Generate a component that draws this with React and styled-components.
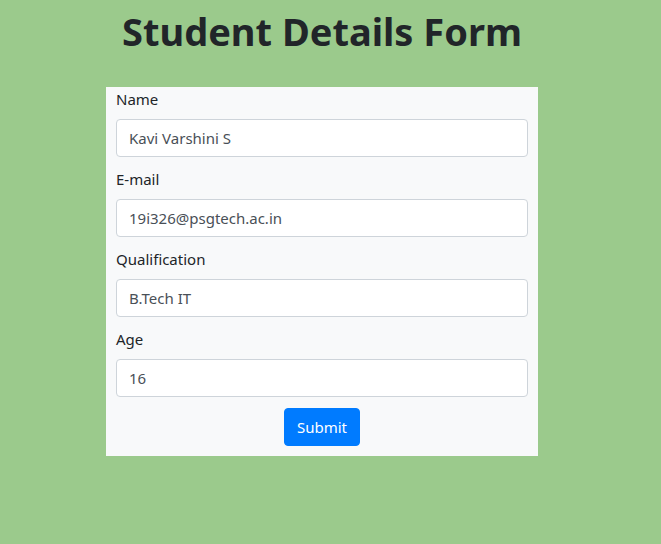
import React from 'react';
import styled, { createGlobalStyle } from 'styled-components';

const GlobalStyle = createGlobalStyle`
  html, body {
    margin: 0;
    padding: 0;
    background-color: #9bca8c;
    font-family: "Noto Sans", "Open Sans", sans-serif;
    color: #212529;
  }
`;

const Page = styled.div`
  width: 644px;
  height: 544px;
  display: flex;
  flex-direction: column;
  align-items: center;
`;

const Title = styled.h1`
  margin: 5px 0 0;
  height: 82px;
  font-size: 38px;
  font-weight: 700;
  line-height: 52px;
  color: #212529;
`;

const Panel = styled.form`
  width: 432px;
  box-sizing: border-box;
  padding: 0 10px 10px;
  background-color: #f8f9fa;
  display: flex;
  flex-direction: column;
`;

const Group = styled.div`
  display: flex;
  flex-direction: column;
  margin-bottom: 10px;
`;

const Label = styled.label`
  font-size: 15px;
  line-height: 24px;
  margin-bottom: 8px;
  color: #212529;
`;

const Input = styled.input`
  height: 38px;
  box-sizing: border-box;
  padding: 6px 12px;
  font-family: inherit;
  font-size: 15px;
  color: #495057;
  background-color: #fff;
  border: 1px solid #ced4da;
  border-radius: 4px;
  outline: none;
`;

const Button = styled.button`
  align-self: center;
  margin-top: 1px;
  height: 38px;
  width: 76px;
  font-family: inherit;
  font-size: 15px;
  color: #fff;
  background-color: #007bff;
  border: 1px solid #007bff;
  border-radius: 4px;
`;

const fields = [
  { label: 'Name', value: 'Kavi Varshini S' },
  { label: 'E-mail', value: '19i326@psgtech.ac.in' },
  { label: 'Qualification', value: 'B.Tech IT' },
  { label: 'Age', value: '16' },
];

const App = () => (
  <Page>
    <GlobalStyle />
    <Title>Student Details Form</Title>
    <Panel onSubmit={(e) => e.preventDefault()}>
      {fields.map((f) => (
        <Group key={f.label}>
          <Label>{f.label}</Label>
          <Input defaultValue={f.value} />
        </Group>
      ))}
      <Button type="submit">Submit</Button>
    </Panel>
  </Page>
);

export default App;
